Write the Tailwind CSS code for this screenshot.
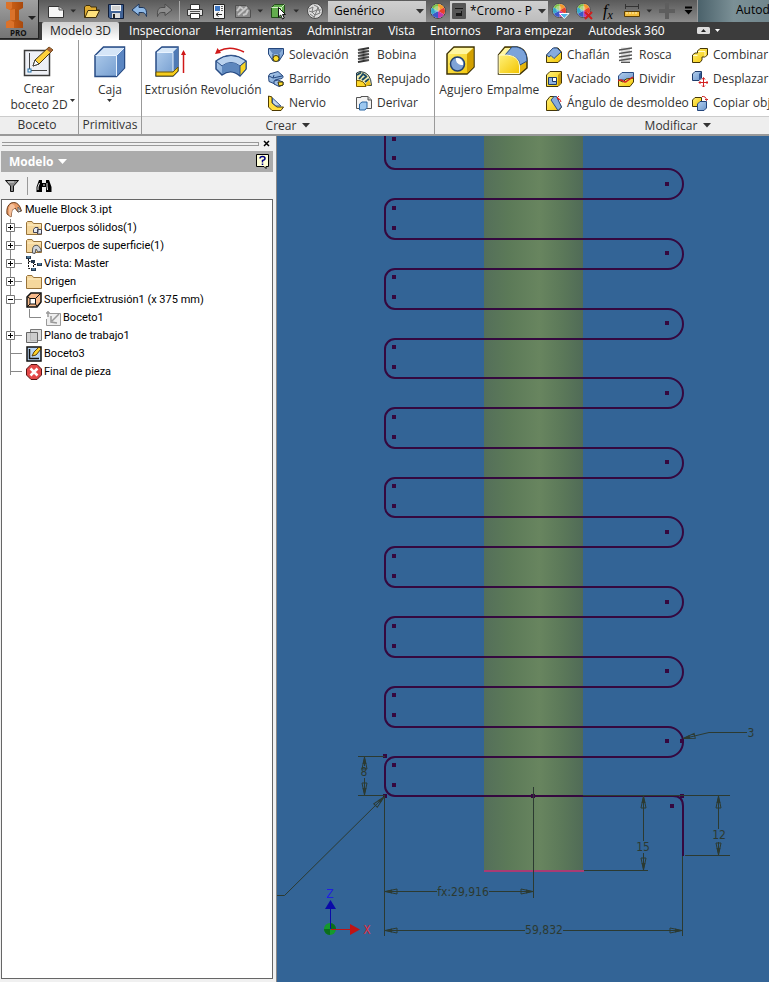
<!DOCTYPE html>
<html lang="es">
<head>
<meta charset="utf-8">
<title>Muelle Block 3.ipt</title>
<script src="https://cdn.jsdelivr.net/npm/@tailwindcss/browser@4"></script>
</head>
<body class="flex h-screen flex-col overflow-hidden bg-[#f0f0f0] font-['Open_Sans',sans-serif] text-xs text-[#333]">

<!-- shared drawings -->
<svg class="absolute size-0" aria-hidden="true">
  <defs>
    <linearGradient id="blue" x1="0" y1="0" x2="1" y2="1"><stop offset="0" stop-color="#b4d0ee"/><stop offset="1" stop-color="#6d97cc"/></linearGradient>
    <linearGradient id="yel" x1="0" y1="0" x2="1" y2="1"><stop offset="0" stop-color="#fff27a"/><stop offset="1" stop-color="#f3c400"/></linearGradient>
    <linearGradient id="org" x1="0" y1="0" x2="1" y2="0"><stop offset="0" stop-color="#d9691a"/><stop offset="1" stop-color="#a8480c"/></linearGradient>
    <linearGradient id="tube"><stop offset="0" stop-color="#546f5a"/><stop offset=".25" stop-color="#5c7a58"/><stop offset=".56" stop-color="#68855f"/><stop offset=".8" stop-color="#5b7859"/><stop offset="1" stop-color="#506b57"/></linearGradient>
    <symbol id="wheel" viewBox="0 0 16 16">
      <circle cx="8" cy="8" r="7.500" fill="#eee" stroke="#444"/>
      <path d="M8 8V1A7 7 0 0 1 14 4.500Z" fill="#f59a2c"/><path d="M8 8L14 4.500A7 7 0 0 1 14 11.500Z" fill="#e8412c"/><path d="M8 8L14 11.500A7 7 0 0 1 8 15Z" fill="#c43aa8"/><path d="M8 8V15A7 7 0 0 1 2 11.500Z" fill="#3b59c9"/><path d="M8 8L2 11.500A7 7 0 0 1 2 4.500Z" fill="#35a9c9"/><path d="M8 8L2 4.500A7 7 0 0 1 8 1Z" fill="#7cc242"/>
      <circle cx="7" cy="6" r="3" fill="#fff" opacity=".35"/>
    </symbol>
    <symbol id="folder" viewBox="0 0 16 16"><path d="M.5 14.500V2.500L1.500 1.500H6L7.500 3.500H15.500V14.500Z" fill="#f5d79c" stroke="#98733a"/><path d="M1.500 5H15" stroke="#fff0c8"/></symbol>
  </defs>
</svg>

<header class="flex h-10 shrink-0 bg-[#3c3c3c]">
  <button aria-label="Menú de la aplicación" class="flex h-[39px] w-[39px] shrink-0 border-r border-b border-[#222] bg-linear-to-b from-[#a0a0a0] to-[#747474]">
    <svg class="h-full w-full" viewBox="0 0 38 38">
      <path d="M6 2H23V8L19 10V20L23 22V28H6V22L10 20V10L6 8Z" fill="url(#org)"/>
      <path d="M6 2H12V8L10 10L6 8ZM10 10L15 9V20H10ZM6 22L10 20L14 22V28H6Z" fill="#db722a"/><path d="M15 9H19V20L15 22Z" fill="#b5530f"/>
      <path d="M28 16H36L32 20Z" fill="#222"/>
      <text x="10" y="36" font-size="8" font-weight="700" fill="#111" font-family="Open Sans">PRO</text>
    </svg>
  </button>
  <div class="flex min-w-0 flex-1 flex-col">
    <div class="flex h-[22px] items-center overflow-hidden bg-linear-to-b from-[#5a5a5a] to-[#8c8c8c]">
      <button aria-label="Nuevo" class="ml-2 shrink-0"><svg width="18" height="18" viewBox="0 0 18 18"><path d="M1.500 4.500H12L16.500 8V15.500H1.500Z" fill="#f6f6f6" stroke="#333"/><path d="M12 4.500V8H16.500" fill="#ccc" stroke="#555"/></svg></button>
      <button aria-label="Opciones de nuevo" class="ml-1 shrink-0"><svg width="8" height="8"><path d="M1.500 2.500H7L4.200 5.500Z" fill="#2c2c2c"/></svg></button>
      <button aria-label="Abrir" class="ml-1.5 shrink-0"><svg width="18" height="18" viewBox="0 0 18 18"><path d="M1.500 15V5L3 3.500H7L8 5H13.500V8H16.500L13 15.500H1.500Z" fill="#e0ac30" stroke="#40300c"/><path d="M5 8.500H16.500L13 15.500H2Z" fill="#ffe27c" stroke="#40300c"/></svg></button>
      <button aria-label="Guardar" class="ml-1.5 shrink-0"><svg width="18" height="18" viewBox="0 0 18 18"><path d="M1.500 2.500H16.500V16.500H3L1.500 15Z" fill="#416396" stroke="#101d38"/><path d="M4 3H14V9H4Z" fill="#f4f4f4"/><path d="M5 5H13M5 7H13" stroke="#aaa"/><path d="M5 11H13V16H5Z" fill="#ddd"/><path d="M6 12H8V16H6Z" fill="#222"/></svg></button>
      <button aria-label="Deshacer" class="ml-1.5 shrink-0"><svg width="18" height="18" viewBox="0 0 18 18"><path d="M1 8L8 2V5.500H11C14.500 5.500 16 8 15.500 14.500C14 11 13 10.500 11 10.500H8V13.500Z" fill="#8fb9e6" stroke="#1d3559"/></svg></button>
      <button aria-label="Rehacer" class="ml-1.5 shrink-0"><svg width="18" height="18" viewBox="0 0 18 18"><path d="M17 8L10 2V5.500H7C3.500 5.500 2 8 2.500 14.500C4 11 5 10.500 7 10.500H10V13.500Z" fill="#8d8d8d" stroke="#4c4c4c"/></svg></button>
      <span class="ml-1.5 h-5 w-px shrink-0 bg-[#aaa]"></span>
      <button aria-label="Imprimir" class="ml-1.5 shrink-0"><svg width="18" height="18" viewBox="0 0 18 18"><path d="M4.500 7V2.500H13.500V7" fill="#fff" stroke="#333"/><path d="M1.500 7.500H16.500V13.500H1.500Z" fill="#e4e4e4" stroke="#333"/><path d="M4.500 11.500H13.500V16.500H4.500Z" fill="#fff" stroke="#333"/><path d="M4 9.500H14" stroke="#555"/></svg></button>
      <button aria-label="Propiedades" class="ml-1.5 shrink-0"><svg width="18" height="18" viewBox="0 0 18 18"><path d="M3.500 2.500H14.500V16.500H3.500Z" fill="#f4f4f4" stroke="#222"/><rect x="5" y="4" width="5" height="5" fill="#3f78c4"/><path d="M11 4.500H13M11 6.500H13M11 8.500H13" stroke="#666"/><path d="M6 12.500H12M8.500 10.500L6 12.500L8.500 14.500" fill="none" stroke="#222"/></svg></button>
      <button aria-label="Actualizar" class="ml-1.5 shrink-0"><svg width="18" height="18" viewBox="0 0 18 18"><path d="M1.500 3.500H12L16.500 8V15.500H1.500Z" fill="#8a8a8a" stroke="#505050"/><path d="M3 9L6 5L9 7M14 8L12 12L9 13M4 13L13 5" fill="none" stroke="#c8c8c8" stroke-width="2"/></svg></button>
      <button aria-label="Opciones de actualizar" class="ml-1 shrink-0"><svg width="8" height="8"><path d="M1.500 2.500H7L4.200 5.500Z" fill="#2c2c2c"/></svg></button>
      <button aria-label="Seleccionar" class="ml-1.5 shrink-0"><svg width="18" height="18" viewBox="0 0 18 18"><path d="M1.500 5.500L4.500 2.500H14.500V12L11.500 15.500H1.500Z" fill="#63ad4e" stroke="#234d1b"/><path d="M1.500 5.500H11.500V15.500M11.500 5.500L14.500 2.500" fill="none" stroke="#d3f0c5"/><path d="M8.500 5.500V15L10.700 13L12.500 17L14.300 16L12.500 12.500H15.500Z" fill="#fff" stroke="#111"/></svg></button>
      <button aria-label="Opciones de selección" class="ml-1 shrink-0"><svg width="8" height="8"><path d="M1.500 2.500H7L4.200 5.500Z" fill="#2c2c2c"/></svg></button>
      <button aria-label="Material" class="ml-1.5 shrink-0"><svg width="18" height="18" viewBox="0 0 18 18"><circle cx="9" cy="9" r="7.500" fill="#dcdcdc" stroke="#4a4a4a"/><path d="M3 7L7 5L6 10L11 8L9 13L14 11M8 3L12 5L11 8L15 8M4 12L8 15M3 9L6 10L9 13L8 16M12 5L13 8L14 11" fill="none" stroke="#7a7a7a"/></svg></button>
      <div class="relative ml-1 h-[21px] w-[98px] shrink-0">
        <select aria-label="Material" class="h-full w-full appearance-none bg-linear-to-b from-[#cfcfcf] to-[#bdbdbd] pl-1.5 text-xs text-black"><option>Genérico</option></select>
        <svg class="pointer-events-none absolute top-2 right-0.5" width="8" height="6"><path d="M0 0H8L4 4.500Z" fill="#333"/></svg>
      </div>
      <button aria-label="Aspecto" class="ml-1 shrink-0"><svg width="16" height="16"><use href="#wheel"/></svg></button>
      <div class="relative ml-1 h-[21px] w-[98px] shrink-0">
        <select aria-label="Aspecto" class="h-full w-full appearance-none bg-linear-to-b from-[#cfcfcf] to-[#bdbdbd] pl-5 text-xs text-black"><option>*Cromo - P</option></select>
        <svg class="pointer-events-none absolute top-0.5 left-0.5" width="14" height="16"><rect width="14" height="16" rx="1" fill="#555"/><path d="M3 3H11V6H3ZM4 8H10V13H4Z" fill="#181818"/><path d="M3 4H11M4 9H9" stroke="#999"/></svg>
        <svg class="pointer-events-none absolute top-2 right-0.5" width="8" height="6"><path d="M0 0H8L4 4.500Z" fill="#333"/></svg>
      </div>
      <button aria-label="Ajustar aspecto" class="ml-1 shrink-0"><svg width="18" height="18"><use href="#wheel" width="15" height="15" y="1"/><path d="M7.500 11.500H17L12.300 16.500Z" fill="#4fb4e8" stroke="#fff"/></svg></button>
      <button aria-label="Borrar aspecto" class="ml-1.5 shrink-0"><svg width="18" height="18"><use href="#wheel" width="15" height="15" y="1"/><path d="M9 10L16 17M16 10L9 17" stroke="#d21c1c" stroke-width="2"/></svg></button>
      <button aria-label="Parámetros" class="ml-1.5 w-4 shrink-0 font-['Liberation_Serif',serif] text-base leading-5 text-black italic">f<sub class="text-xs">x</sub></button>
      <button aria-label="Medir" class="ml-2 shrink-0"><svg width="17" height="16"><path d="M1 3.500H15M1.500 1V6M14.500 1V6" stroke="#333"/><path d="M.5 8.500H15.500V13.500H.5Z" fill="#f3bd3c" stroke="#5a3d05"/><path d="M3 9V11M6 9V11M9 9V11M12 9V11" stroke="#fff3b8"/></svg></button>
      <button aria-label="Opciones de medida" class="ml-1 shrink-0"><svg width="8" height="8"><path d="M1.500 2.500H7L4.200 5.500Z" fill="#2c2c2c"/></svg></button>
      <button aria-label="Añadir" class="ml-1.5 shrink-0"><svg width="17" height="16"><path d="M6 0H10V6H16V10H10V16H6V10H0V6H6Z" fill="#5e5e5e"/></svg></button>
      <button aria-label="Personalizar barra" class="ml-2 shrink-0"><svg width="9" height="10"><path d="M1 1.500H8" stroke="#000" stroke-width="2"/><path d="M.5 4H8.500L4.500 8.500Z" fill="#000"/></svg></button>
      <div class="ml-1 h-full min-w-0 flex-1 overflow-hidden border-l border-[#999] bg-linear-to-r from-[#4b626b] via-[#7b9096] to-[#71868d] pl-[38px] text-xs leading-5 whitespace-nowrap text-black">Autodesk</div>
    </div>
    <nav class="flex h-[18px] items-stretch gap-px overflow-hidden whitespace-nowrap text-white">
      <a href="#" class="mr-0.5 ml-[3px] shrink-0 rounded-t-xs bg-linear-to-b from-[#cfcfcf] to-white px-2 leading-[17px] text-[#222]">Modelo 3D</a>
      <a href="#" class="px-[7px] leading-[17px]">Inspeccionar</a>
      <a href="#" class="px-[7px] leading-[17px]">Herramientas</a>
      <a href="#" class="px-[7px] leading-[17px]">Administrar</a>
      <a href="#" class="px-[7px] leading-[17px]">Vista</a>
      <a href="#" class="px-[7px] leading-[17px]">Entornos</a>
      <a href="#" class="px-[7px] leading-[17px]">Para empezar</a>
      <a href="#" class="px-[7px] leading-[17px]">Autodesk 360</a>
      <button aria-label="Minimizar cinta" class="ml-6"><svg width="24" height="12"><rect y="2" width="13" height="7" rx="1.500" fill="#ddd"/><path d="M4 7H9L6.500 4Z" fill="#222"/><path d="M18 4H23L20.500 7Z" fill="#fff"/></svg></button>
    </nav>
  </div>
</header>

<div class="flex h-24 shrink-0 overflow-hidden border-b-2 border-[#999] bg-white whitespace-nowrap">
  <section class="flex w-[79px] shrink-0 flex-col border-r border-[#999]">
    <div class="flex-1 px-0.5 pt-1.5">
      <button class="relative w-full leading-4">
        <svg class="mx-auto" width="32" height="32"><path d="M1.500 4.500H26.500V29.500H1.500Z" fill="#eef0f6" stroke="#3a3a3a" stroke-width="1.500"/><path d="M6.500 7V24.500H24" fill="none" stroke="#444"/><rect x="5" y="23" width="3" height="3" fill="#fff" stroke="#2570a8"/><path d="M10 20L12 14L26 1L30 4L16 18Z" fill="#ffd23c" stroke="#4a3810"/><path d="M10 20L12 14L16 18Z" fill="#fff" stroke="#444"/><path d="M26 1L30 4L27.500 6.500L23.500 3.500Z" fill="#a86435"/></svg>
        <span class="mt-[3px] block">Crear<br>boceto 2D</span>
        <svg class="absolute right-0 bottom-2.5" width="6" height="4"><path d="M0 0H5L2.500 3Z" fill="#333"/></svg>
      </button>
    </div>
    <h2 class="h-[18px] border-t border-[#ccc] bg-[#eee] pr-1 text-center leading-[16px]">Boceto</h2>
  </section>
  <section class="flex w-[63px] shrink-0 flex-col border-r border-[#999]">
    <div class="flex-1 pt-1.5">
      <button class="w-full leading-[15px]">
        <svg class="mx-auto" width="32" height="32"><path d="M1 9.500L9.500 1H30.500V22L22.500 30.500H1Z" fill="url(#blue)" stroke="#284c85" stroke-width="1.500"/><path d="M2 9.500L10 2H29.500L22.500 9.500Z" fill="#d5e5f7"/><path d="M22.500 9.500L30 2V22L22.500 30Z" fill="#5b86c2"/><path d="M1.500 9.500H22.500V30M22.500 9.500L30 2" fill="none" stroke="#e9f3ff"/></svg>
        <span class="mt-1 block">Caja</span>
        <svg class="mx-auto mt-0.5" width="6" height="4"><path d="M0 0H5L2.500 3Z" fill="#333"/></svg>
      </button>
    </div>
    <h2 class="h-[18px] border-t border-[#ccc] bg-[#eee] text-center leading-[16px]">Primitivas</h2>
  </section>
  <section class="flex w-[293px] shrink-0 flex-col border-r border-[#999]">
    <div class="flex flex-1">
      <button class="ml-0.5 flex w-[54px] flex-col items-center pt-1.5 leading-[15px]">
        <svg width="32" height="32"><path d="M1 6L7 1H23V25L18 30H1Z" fill="url(#blue)" stroke="#284c85" stroke-width="1.500"/><path d="M18 6L23 1V25L18 30Z" fill="#4f7ab5"/><path d="M2 6L7 2H22L18 6Z" fill="#d8e8f8"/><path d="M1 26H18L23 21V25L18 30H1Z" fill="#f5cd1e" stroke="#705806"/><path d="M2 6.500H18V25" fill="none" stroke="#e9f3ff"/><path d="M28.500 27V6" stroke="#d01818" stroke-width="1.500"/><path d="M26 9L28.500 4L31 9Z" fill="#d01818"/></svg>
        <span class="mt-1">Extrusión</span>
      </button>
      <button class="flex w-[66px] flex-col items-center pt-1.5 leading-[15px]">
        <svg width="32" height="32"><path d="M1 15Q16 4 31 15V23L25 30Q16 22 7 29L1 23Z" fill="url(#blue)" stroke="#284c85" stroke-width="1.500"/><path d="M1 15Q16 4 31 15L25 20Q16 13 7 20Z" fill="#b9d2ee" stroke="#284c85"/><path d="M7 20Q16 13 25 20V29Q16 22 7 28Z" fill="#5d87bd"/><path d="M25 20L31 15V23L25 30Z" fill="#f9d421" stroke="#284c85"/><path d="M29 6Q15-1 4 5" fill="none" stroke="#d01818" stroke-width="1.500"/><path d="M0 8L2.500 2L6 7Z" fill="#d01818"/></svg>
        <span class="mt-1">Revolución</span>
      </button>
      <div class="ml-1 grid grid-cols-[88px_78px] grid-rows-[24px_24px_24px] content-start pt-[3px]">
        <button class="flex items-center gap-[5px]"><svg width="16" height="16"><path d="M.5 1.500H15.500V7L11 14H5L.5 7Z" fill="url(#blue)" stroke="#24467c"/><path d="M1 2H15L11 7H5Z" fill="#6288bd"/><path d="M5 7V13M11 7V13" stroke="#24467c"/><circle cx="8" cy="11.500" r="3" fill="#ffdf30" stroke="#3d3308"/></svg>Solevación</button>
        <button class="flex items-center gap-[5px]"><svg width="16" height="16"><path d="M2 3L13 1M2 6L13 4M2 9L13 7M2 12L13 10M2 15L13 13" stroke="#333" stroke-width="2"/><path d="M2 3L13 4M2 6L13 7M2 9L13 10M2 12L13 13" stroke="#777"/></svg>Bobina</button>
        <button class="flex items-center gap-[5px]"><svg width="16" height="16"><path d="M.5 5Q1 2 5 2L10 .5L15 5Q15.500 8 11 8L7 9V13L1 10.500Z" fill="url(#blue)" stroke="#24467c"/><path d="M1 5L5 7L14 5M5 7L6 4" fill="none" stroke="#24467c"/><path d="M6 10L10 9L15 11V14L11 15.500L6 13Z" fill="#9dbde4" stroke="#24467c"/><path d="M10 11L15 11V14L11 15Z" fill="#ffdf30" stroke="#3d3308"/></svg>Barrido</button>
        <button class="flex items-center gap-[5px]"><svg width="16" height="16"><path d="M.5 10V2L4 .5Q15 1 15.500 14.500H10Q8 10 .5 10Z" fill="#f7f0b0" stroke="#263a44"/><path d="M1 4L5 1.500M3 8L7 3L10 5M6 9L11 5M9 11L13 8" stroke="#1c4a66" stroke-width="2" fill="none"/><path d="M.5 9.500Q8 9 10 15.500H.5Z" fill="#ffd92a" stroke="#7a5a00"/><path d="M10 15V12L13 9L15 14Z" fill="#ecc01c"/></svg>Repujado</button>
        <button class="flex items-center gap-[5px]"><svg width="16" height="16"><path d="M.5 1L4 2V8L9 12H15.500L13 15.500H4L.5 12Z" fill="#ffdf40" stroke="#4e3a00"/><path d="M4.500 3L13 11H8L4.500 8Z" fill="#c2d6ef" stroke="#365888"/></svg>Nervio</button>
        <button class="flex items-center gap-[5px]"><svg width="16" height="16"><path d="M.5 2.500H5V1.500H12L15.500 5V13.500H.5Z" fill="#f3f3f3" stroke="#555"/><path d="M12 1.500V5H15.500" fill="#ccc" stroke="#555"/><path d="M3.500 9L6 7H11V12.500L9 15H3.500Z" fill="#9cc8f0" stroke="#2a66a4"/></svg>Derivar</button>
      </div>
    </div>
    <h2 class="flex h-[18px] items-center justify-center gap-1.5 border-t border-[#ccc] bg-[#eee] leading-[16px]">Crear <svg width="8" height="5"><path d="M0 0H8L4 4.500Z" fill="#333"/></svg></h2>
  </section>
  <section class="flex w-[486px] shrink-0 flex-col">
    <div class="flex flex-1">
      <button class="flex w-[52px] flex-col items-center pt-1.5 leading-[15px]">
        <svg width="32" height="32"><path d="M2 8L9 1H29V21L22 28H2Z" fill="url(#yel)" stroke="#3f3408" stroke-width="1.500"/><path d="M3 8L9 2H28L22 8Z" fill="#fff6a0"/><path d="M22 8L28.500 2V21L22 27.500Z" fill="#d3a000"/><circle cx="12.500" cy="18" r="7" fill="#7fa3d6" stroke="#23406e" stroke-width="1.500"/><path d="M11 12A6 6 0 0 0 18 19A6 6 0 0 0 11 12Z" fill="#fff"/></svg>
        <span class="mt-1">Agujero</span>
      </button>
      <button class="flex w-[52px] flex-col items-center pt-1.5 leading-[15px]">
        <svg width="32" height="32"><path d="M1.500 9L8 1H20Q30 3 30 15V22L23 28H1.500Z" fill="#e4b50c" stroke="#3f3408" stroke-width="1.500"/><path d="M2 9L8 2H14L9 9Z" fill="#fff6a0"/><path d="M8 9L15 1H20Q30 3 30 15L23 19Q22 9 8 9Z" fill="#7ba3da" stroke="#284c85"/><path d="M2 9H10Q22 10 22.500 20V27.500H2Z" fill="url(#yel)" stroke="#fffbd0"/></svg>
        <span class="mt-1">Empalme</span>
      </button>
      <div class="ml-[7px] grid grid-cols-[72px_74px_auto] grid-rows-[24px_24px_24px] content-start pt-[3px]">
        <button class="flex items-center gap-[5px]"><svg width="16" height="16"><path d="M.5 8L8 1H12L15.500 5V12L12 15.500H.5Z" fill="url(#yel)" stroke="#453606"/><path d="M.5 8L7 1H11L15 5L8 11.500L5 8.500L3 10Z" fill="#86abdd" stroke="#2b4e86"/></svg>Chaflán</button>
        <button class="flex items-center gap-[5px]"><svg width="16" height="16"><path d="M3 .5H12V15.500H3Z" fill="#ddd"/><path d="M1 3L14 1M1 6.500L14 4.500M1 10L14 8M1 13.500L14 11.500M3 15.500H12" stroke="#555" stroke-width="1.500"/></svg>Rosca</button>
        <button class="flex items-center gap-[5px]"><svg width="16" height="16"><path d="M5.500 4L8 1.500H15.500V8L13 10H10V13L8 15.500H.5V8L3 6H5.500Z" fill="url(#yel)" stroke="#453606"/><path d="M1 8.500H5.500M6 4.500H13V9.500" fill="none" stroke="#fffbd0"/></svg>Combinar</button>
        <button class="flex items-center gap-[5px]"><svg width="16" height="16"><path d="M.5 4L4 .5H15.500V12L12 15.500H.5Z" fill="url(#yel)" stroke="#453606"/><path d="M12 4L15 1V12L12 15Z" fill="#c99b0c"/><path d="M2.500 6.500H10.500V13.500H2.500Z" fill="#8cb0e0" stroke="#1d3a66"/><path d="M6.500 7V10.500H10" fill="none" stroke="#1d3a66"/><path d="M7 7H10V10H7Z" fill="#fff"/></svg>Vaciado</button>
        <button class="flex items-center gap-[5px]"><svg width="16" height="16"><path d="M.5 5L4 1.500H15.500V7L12 9H.5Z" fill="url(#blue)" stroke="#284c85"/><path d="M.5 9L5 11L8 8L15.500 7V11L12 15.500H.5Z" fill="url(#yel)" stroke="#453606"/><path d="M0 10Q3 8 5 10T9 10L15 6" fill="none" stroke="#d42020" stroke-width="1.500"/></svg>Dividir</button>
        <button class="flex items-center gap-[5px]"><svg width="16" height="16"><path d="M.5 3L3 .5H9.500V7L7 9.500H.5Z" fill="url(#blue)" stroke="#1f3c6b"/><path d="M7 3L9 1V7L7 9Z" fill="#345b96"/><path d="M11.500 7V16M7 11.500H16M10 8.500L11.500 6.500L13 8.500M10 14.500L11.500 16L13 14.500M8.500 10L7 11.500L8.500 13M14.500 10L16 11.500L14.500 13" fill="none" stroke="#d42020"/></svg>Desplazar</button>
        <button class="col-span-2 flex items-center gap-[5px]"><svg width="16" height="16"><path d="M.5 6L4 1.500H10L15.500 12L13 15.500H.5Z" fill="url(#yel)" stroke="#453606"/><path d="M5 5L8 1.500H10.500L15.500 12L12 15.500Z" fill="#86abdd" stroke="#2b4e86"/><path d="M11 3Q14 3 15 7M11 3L13 1M11 3L13 5" fill="none" stroke="#d42020"/></svg>Ángulo de desmoldeo</button>
        <button class="flex items-center gap-[5px]"><svg width="16" height="16"><path d="M.5 5L3 2.500H9.500V9L7 11.500H.5Z" fill="url(#yel)" stroke="#453606"/><path d="M5.500 9L8 6.500H14.500V13L12 15.500H5.500Z" fill="url(#blue)" stroke="#24467c"/><path d="M10 1.500Q14 1 14.500 5M13 4L14.500 5.500L16 4" fill="none" stroke="#d42020"/></svg>Copiar objeto</button>
      </div>
    </div>
    <h2 class="flex h-[18px] items-center justify-center gap-1.5 border-t border-[#ccc] bg-[#eee] leading-[16px]">Modificar <svg width="8" height="5"><path d="M0 0H8L4 4.500Z" fill="#333"/></svg></h2>
  </section>
</div>

<main class="flex min-h-0 flex-1">
  <aside class="flex w-[277px] shrink-0 flex-col border-r border-[#888] pr-[3px] pb-[3px] pl-px text-black">
    <div class="flex h-[15px] items-center justify-between pl-px">
      <span class="h-1 w-[257px] border-y border-r border-[#999]"></span>
      <button aria-label="Cerrar panel" class="pr-[3px]"><svg width="7" height="7"><path d="M1 1L6 6M6 1L1 6" stroke="#000" stroke-width="1.500"/></svg></button>
    </div>
    <div class="flex h-[21px] items-center justify-between bg-[#ababab] pr-1 pl-2">
      <button class="flex items-center gap-1 text-xs font-bold text-white">Modelo <svg width="9" height="5"><path d="M0 0H9L4.500 5Z" fill="#fff"/></svg></button>
      <button aria-label="Ayuda"><svg width="13" height="15"><path d="M.5 .5H12.500V12.500H10V14.500L8 12.500H.5Z" fill="#ffffd8" stroke="#000"/><path d="M4 4.500Q4 2.500 6.500 2.500T9 4.500Q9 6 6.500 6.500V8.500M6.500 9.500V11" fill="none" stroke="#000080" stroke-width="1.500"/></svg></button>
    </div>
    <div class="flex h-[27px] items-center gap-2 pl-1">
      <button aria-label="Filtro"><svg width="14" height="12"><path d="M.5 .5H13.500L8.500 6V11.500H5.500V6Z" fill="#888" stroke="#111"/><path d="M3 2H9" stroke="#ddd"/></svg></button>
      <span class="h-[18px] w-px bg-[#999]"></span>
      <button aria-label="Buscar"><svg width="16" height="14"><path d="M3 1H6V4H10V1H13L15.500 8V13H10V8H6V13H.5V8Z" fill="#000"/><path d="M3.500 4L2 8V11M11 4V7L11.500 11M8 5V7" fill="none" stroke="#eee"/></svg></button>
    </div>
    <div class="flex-1 overflow-hidden border border-[#666] bg-white pt-px font-['Roboto',sans-serif] text-[11px]">
      <div class="flex h-[18px] items-center gap-[3px] pl-1"><svg width="16" height="16"><path d="M1 12Q0 4 5 1Q11-1 14 5L15.500 9L12 10L9 6L6 8L5 15Z" fill="#e89b66" stroke="#6a3c1c"/><path d="M5 2Q9 2 9 6L6 8L5 15L3 13Q2 5 5 2Z" fill="#f6c09a"/><path d="M12 5L15 9L12 10Z" fill="#ddd" stroke="#666"/></svg>Muelle Block 3.ipt</div>
      <ul class="[&>li]:flex [&>li]:h-[18px] [&>li]:items-center [&>li]:gap-[2px] [&>li]:pl-1">
        <li><button aria-label="Expandir"><svg width="18" height="18"><path d="M4.500 0V18M5 8.500H16" stroke="#888"/><path d="M.5 4.500H8.500V12.500H.5Z" fill="#fff" stroke="#777"/><path d="M2 8.500H7M4.500 6V11" stroke="#000"/></svg></button><svg width="16" height="16"><use href="#folder" width="16" height="16"/><path d="M7.500 9.500L9 7.500H12V12.500H7.500ZM11.500 9.500H15.500V14H11.500Z" fill="#e5ebf3" stroke="#445"/></svg><span>Cuerpos sólidos(1)</span></li>
        <li><button aria-label="Expandir"><svg width="18" height="18"><path d="M4.500 0V18M5 8.500H16" stroke="#888"/><path d="M.5 4.500H8.500V12.500H.5Z" fill="#fff" stroke="#777"/><path d="M2 8.500H7M4.500 6V11" stroke="#000"/></svg></button><svg width="16" height="16"><use href="#folder" width="16" height="16"/><path d="M6.500 15Q6 8 9 7.500Q13 6 15.500 13L12 14L10 11L9 15.500Z" fill="#d0d4da" stroke="#555"/></svg><span>Cuerpos de superficie(1)</span></li>
        <li><button aria-label="Expandir"><svg width="18" height="18"><path d="M4.500 0V18M5 8.500H16" stroke="#888"/><path d="M.5 4.500H8.500V12.500H.5Z" fill="#fff" stroke="#777"/><path d="M2 8.500H7M4.500 6V11" stroke="#000"/></svg></button><svg width="16" height="16"><path d="M2.500 3V12.500H5M2.500 5.500H6M7.500 6V13M8 8.500H12" fill="none" stroke="#111" stroke-dasharray="2 1"/><path d="M0 0H5V3H0ZM5 4H9V7H5ZM11 7H16V10H11ZM5 12H10V15H5Z" fill="#24384e"/><path d="M1 1H4M12 8H15M6 13H9" stroke="#74b0dc"/></svg><span>Vista: Master</span></li>
        <li><button aria-label="Expandir"><svg width="18" height="18"><path d="M4.500 0V18M5 8.500H16" stroke="#888"/><path d="M.5 4.500H8.500V12.500H.5Z" fill="#fff" stroke="#777"/><path d="M2 8.500H7M4.500 6V11" stroke="#000"/></svg></button><svg width="16" height="16"><use href="#folder" width="16" height="16"/></svg><span>Origen</span></li>
        <li><button aria-label="Contraer"><svg width="18" height="18"><path d="M4.500 0V18M5 8.500H16" stroke="#888"/><path d="M.5 4.500H8.500V12.500H.5Z" fill="#fff" stroke="#777"/><path d="M2 8.500H7" stroke="#000"/></svg></button><svg width="16" height="16"><path d="M1 5L5 1H15V10L11 15H1Z" fill="#f6b98a" stroke="#111" stroke-width="1.500"/><path d="M4 6.500H9.500V12H4Z" fill="#fff" stroke="#111"/><path d="M9.500 6.500L14.500 1.500M9.500 12L11 14.500M4 6.500L1.500 5M4 12L1 15" stroke="#111"/></svg><span>SuperficieExtrusión1 (x 375 mm)</span></li>
        <li><svg width="37" height="18"><path d="M4.500 0V18M23.500 0V8.500H35" fill="none" stroke="#888"/></svg><svg width="16" height="16"><path d="M4.500 3.500H15.500V15.500H1.500V9" fill="#eee" stroke="#999"/><path d="M3 1V7M1 3H5M6 6V12L12 13M7 11L14 4" fill="none" stroke="#999" stroke-width="1.500"/></svg><span>Boceto1</span></li>
        <li><button aria-label="Expandir"><svg width="18" height="18"><path d="M4.500 0V18M5 8.500H16" stroke="#888"/><path d="M.5 4.500H8.500V12.500H.5Z" fill="#fff" stroke="#777"/><path d="M2 8.500H7M4.500 6V11" stroke="#000"/></svg></button><svg width="16" height="16"><path d="M4.500 1.500H15.500V12.500H4.500Z" fill="#ddd" stroke="#777"/><path d="M.5 4.500H11.500V14.500H.5Z" fill="#c8c8c8" fill-opacity=".8" stroke="#666"/></svg><span>Plano de trabajo1</span></li>
        <li><svg width="18" height="18"><path d="M4.500 0V18M5 8.500H16" stroke="#888"/></svg><svg width="16" height="16"><path d="M1 1H15V15H1Z" fill="#b8d4f2" stroke="#111" stroke-width="1.500"/><path d="M3.500 3V12.500H13" fill="none" stroke="#111" stroke-width="1.500"/><path d="M6 10L8 6L13 1L15 3L10 9Z" fill="#ffd32a" stroke="#5a3d05"/></svg><span>Boceto3</span></li>
        <li><svg width="18" height="18"><path d="M4.500 0V12M5 8.500H16" stroke="#888"/></svg><svg width="16" height="16"><path d="M5 .5H11L15.500 5V11L11 15.500H5L.5 11V5Z" fill="#e34848" stroke="#5a1414"/><path d="M4.500 4.500L11.500 11.500M11.500 4.500L4.500 11.500" stroke="#fff" stroke-width="2.500"/></svg><span>Final de pieza</span></li>
      </ul>
    </div>
  </aside>

  <section aria-label="Área de dibujo" class="min-w-0 flex-1 overflow-hidden bg-[#336496]">
    <svg class="h-full w-full font-['DejaVu_Sans_Condensed','DejaVu_Sans',sans-serif] text-xs">
      <defs>
        <path id="turn" d="M665 182h4v4h-4ZM392 206h4v4h-4ZM392 226h4v4h-4Z" fill="#35083f"/>
        <g id="tip" fill="none" stroke="#2c3a31"><path d="M0 0L12-2.500V2.500Z"/><path d="M0 0L7-2V2Z" fill="#2c3a31" stroke="none"/></g>
      </defs>
      <g transform="translate(-277 -136)">
        <rect x="484" y="136" width="99" height="734" fill="url(#tube)"/>
        <path d="M484 871H584" stroke="#a83c74" stroke-width="2"/>
        <path fill="none" stroke="#35083f" stroke-width="2" d="M385 136V159a10 10 0 0 0 10 10
          h273a15 15 0 0 1 0 30h-273a10 10 0 0 0 -10 10v20a10 10 0 0 0 10 10
          h273a15 15 0 0 1 0 30h-273a10 10 0 0 0 -10 10v20a10 10 0 0 0 10 10
          h273a15 15 0 0 1 0 30h-273a10 10 0 0 0 -10 10v19a10 10 0 0 0 10 10
          h273a15 15 0 0 1 0 30h-273a10 10 0 0 0 -10 10v20a10 10 0 0 0 10 10
          h273a15 15 0 0 1 0 30h-273a10 10 0 0 0 -10 10v19a10 10 0 0 0 10 10
          h273a15 15 0 0 1 0 30h-273a10 10 0 0 0 -10 10v20a10 10 0 0 0 10 10
          h273a15 15 0 0 1 0 30h-273a10 10 0 0 0 -10 10v20a10 10 0 0 0 10 10
          h273a15 15 0 0 1 0 30h-273a10 10 0 0 0 -10 10v20a10 10 0 0 0 10 10
          h273a15 15 0 0 1 0 30h-273a10 10 0 0 0 -10 10v19a10 10 0 0 0 10 10
          H673Q683 796 683 806V856"/>
        <path d="M392 137h4v4h-4ZM392 156h4v4h-4Z" fill="#35083f"/>
        <use href="#turn"/><use href="#turn" y="69"/><use href="#turn" y="139"/><use href="#turn" y="209"/><use href="#turn" y="278"/><use href="#turn" y="348"/><use href="#turn" y="418"/><use href="#turn" y="487"/><use href="#turn" y="557"/>
        <path d="M680 739h4v4h-4ZM383 754h4v4h-4ZM383 794h4v4h-4ZM531 794h4v4h-4ZM670 804h4v4h-4ZM680 794h4v4h-4Z" fill="#35083f"/>
        <g fill="none" stroke="#2c3a31">
          <path d="M358 756.500H385M358 795.500H385M364.500 757V766M364.500 778V796"/>
          <path d="M277 895.500H284.500L384 797"/>
          <path d="M384.500 796V936M533.500 787V898M682.500 856V936"/>
          <path d="M385 891.500H437M489 891.500H533M385 930.500H525M563 930.500H682"/>
          <path d="M583 795.500H730M584 870.500H648M685 855.500H730"/>
          <path d="M643.500 796V841M643.500 853V870M718.500 796V829M718.500 842V855"/>
          <path d="M684 738.500L709 732.500H747"/>
        </g>
        <use href="#tip" transform="translate(364.500 757) rotate(90)"/><use href="#tip" transform="translate(364.500 795) rotate(-90)"/>
        <use href="#tip" transform="translate(384 797) rotate(135)"/>
        <use href="#tip" transform="translate(385 891.500)"/><use href="#tip" transform="translate(533 891.500) rotate(180)"/>
        <use href="#tip" transform="translate(385 930.500)"/><use href="#tip" transform="translate(682 930.500) rotate(180)"/>
        <use href="#tip" transform="translate(643.500 796) rotate(90)"/><use href="#tip" transform="translate(643.500 870) rotate(-90)"/>
        <use href="#tip" transform="translate(718.500 796) rotate(90)"/><use href="#tip" transform="translate(718.500 855) rotate(-90)"/>
        <use href="#tip" transform="translate(683 738.500) rotate(-13)"/>
        <g fill="#2c3a31" text-anchor="middle">
          <text x="364" y="776">8</text><text x="463" y="896">fx:29,916</text><text x="544" y="934">59,832</text><text x="643" y="851">15</text><text x="719" y="839">12</text><text x="751" y="737">3</text>
        </g>
        <circle cx="330" cy="929" r="6" fill="#159a2b"/><path d="M330 929V923A6 6 0 0 1 336 929ZM330 929V935A6 6 0 0 1 324 929Z" fill="#0b6e1c"/>
        <path d="M330.500 929V909" stroke="#0a0aa8"/><path d="M325 909L330.500 900L336 909Z" fill="#0a0aa8"/>
        <path d="M331 929.500H350" stroke="#c01414"/><path d="M350 924L360 929.500L350 935Z" fill="#c01414"/>
        <text x="330" y="898" fill="#2020e0" text-anchor="middle">Z</text><text x="367" y="934" fill="#e02a3a" text-anchor="middle">X</text>
      </g>
    </svg>
  </section>
</main>
</body>
</html>
